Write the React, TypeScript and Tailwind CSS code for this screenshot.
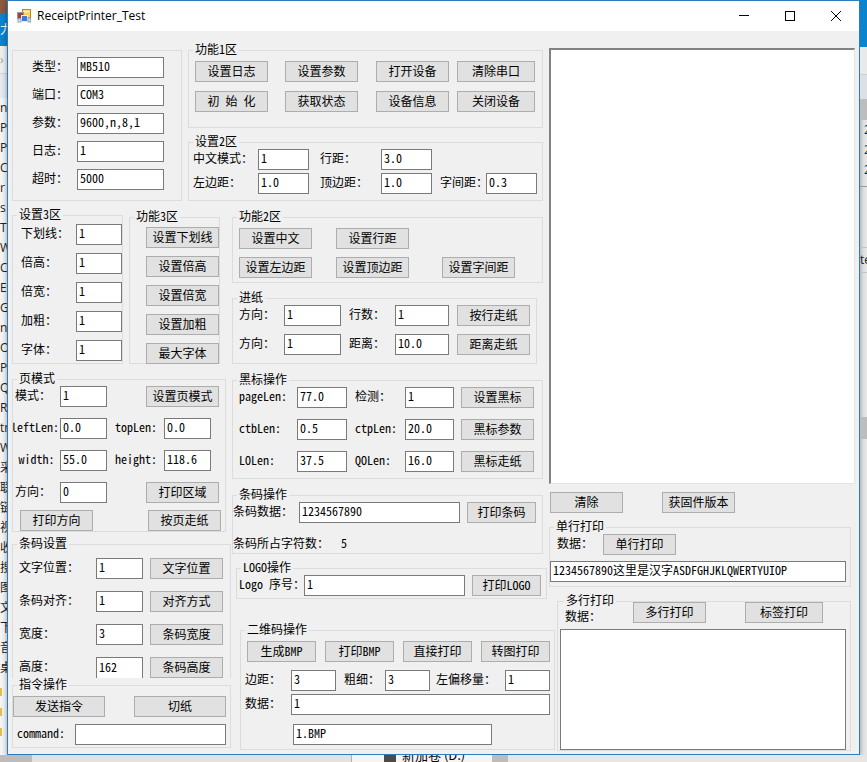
import type { ReactNode } from "react";

const sideItems = [
  "n", "P", "P", "C", "r", "s", "T", "W", "Cl", "Ev", "G", "nc", "O", "Ph", "Q",
  "Ro", "tn", "W", "采", "联", "链", "视", "收", "搜", "图", "文", "下", "音", "桌",
];

const Group = ({
  title,
  className = "",
  children,
}: {
  title?: string;
  className?: string;
  children: ReactNode;
}) => {
  return (
    <fieldset className={`min-w-0 border border-[#dcdcdc] ${className}`}>
      {title && (
        <legend className="ml-1 px-0.5 pb-0.5 leading-3">{title}</legend>
      )}
      {children}
    </fieldset>
  );
};

const Btn = ({
  children,
  className = "w-[73px]",
}: {
  children: ReactNode;
  className?: string;
}) => {
  return (
    <button
      type="button"
      className={`h-[21px] shrink-0 border border-[#adadad] bg-[#e1e1e1] pb-0.5 text-center leading-[17px] whitespace-nowrap ${className}`}
    >
      {children}
    </button>
  );
};

const Field = ({
  id,
  label,
  value = "",
  labelClass = "",
  inputClass = "",
}: {
  id: string;
  label: string;
  value?: string;
  labelClass?: string;
  inputClass?: string;
}) => {
  return (
    <>
      <label
        htmlFor={id}
        className={`leading-[18px] whitespace-nowrap ${labelClass}`}
      >
        {label}
      </label>
      <input
        id={id}
        type="text"
        defaultValue={value}
        className={`h-[21px] w-full min-w-0 border border-[#7a7a7a] bg-white px-0.5 pb-1 leading-[15px] outline-none ${inputClass}`}
      />
    </>
  );
};

const AppIcon = () => (
  <svg width="14" height="14" viewBox="0 0 14 14" aria-hidden="true">
    <rect x="5.5" y="0.5" width="8" height="8" fill="#f8d252" stroke="#b98a1c" />
    <rect x="6.5" y="1.5" width="6" height="2" fill="#fdeeb0" />
    <rect x="0.5" y="3.5" width="6" height="6" fill="#c8341f" stroke="#8d9bb0" />
    <rect x="4.5" y="6.5" width="6" height="6" fill="#3f78d8" stroke="#e6edf8" />
    <rect x="1" y="10" width="3" height="3" fill="#e4e7ee" stroke="#9aa6ba" />
    <rect x="11" y="9" width="2.5" height="4" fill="#cfd8e8" stroke="#9aa6ba" />
  </svg>
);

const TitleBar = () => {
  return (
    <header className="flex h-[30px] items-center bg-white pl-[9px]">
      <AppIcon />
      <h1 className="ml-1.5 flex-1 font-['Open_Sans','Noto_Sans',sans-serif] text-[12px] font-normal">
        ReceiptPrinter_Test
      </h1>
      <button type="button" aria-label="Minimize" className="flex h-full w-[46px] items-center justify-center">
        <svg width="10" height="10" viewBox="0 0 10 10" stroke="#000" fill="none">
          <path d="M0 4.5h10" />
        </svg>
      </button>
      <button type="button" aria-label="Maximize" className="flex h-full w-[46px] items-center justify-center">
        <svg width="10" height="10" viewBox="0 0 10 10" stroke="#000" fill="none">
          <rect x="0.5" y="0.5" width="9" height="9" />
        </svg>
      </button>
      <button type="button" aria-label="Close" className="flex h-full w-[46px] items-center justify-center">
        <svg width="10" height="10" viewBox="0 0 10 10" stroke="#000" fill="none">
          <path d="M0 0l10 10M10 0L0 10" />
        </svg>
      </button>
    </header>
  );
};

const TopArea = () => {
  return (
    <div className="flex gap-[6px]">
      <Group className="mt-[7px] w-[170px] pt-1.5 pr-[17px] pl-[19px]">
        <div className="grid grid-cols-[45px_1fr] gap-y-[7px]">
          <Field id="type" label="类型：" value="MB510" />
          <Field id="port" label="端口：" value="COM3" />
          <Field id="params" label="参数：" value="9600,n,8,1" />
          <Field id="log" label="日志:" value="1" />
          <Field id="timeout" label="超时：" value="5000" />
        </div>
      </Group>
      <div className="flex w-[355px] flex-col gap-[7px]">
        <Group title="功能1区" className="pb-[15px]">
          <div className="grid grid-cols-[90px_91px_81px_78px] gap-y-[9px] pt-1 pl-1.5">
            <Btn>设置日志</Btn>
            <Btn>设置参数</Btn>
            <Btn>打开设备</Btn>
            <Btn className="w-[78px]">清除串口</Btn>
            <Btn>初 始 化</Btn>
            <Btn>获取状态</Btn>
            <Btn>设备信息</Btn>
            <Btn className="w-[78px]">关闭设备</Btn>
          </div>
        </Group>
        <Group title="设置2区" className="pb-1.5">
          <div className="grid grid-cols-[69px_51px_72px_51px_54px_51px] gap-y-[3px]">
            <Field id="cnMode" label="中文模式：" value="1" labelClass="pl-1" />
            <Field id="lineGap" label="行距：" value="3.0" labelClass="pl-[11px]" />
            <span className="col-span-2" />
            <Field id="leftGap" label="左边距：" value="1.0" labelClass="pl-1" />
            <Field id="topGap" label="顶边距：" value="1.0" labelClass="pl-[11px]" />
            <Field id="charGap" label="字间距：" value="0.3" labelClass="pl-2" />
          </div>
        </Group>
      </div>
    </div>
  );
};

const LeftColumn = () => {
  return (
    <div className="flex w-[220px] flex-col">
      <div className="flex gap-[6px]">
        <Group title="设置3区" className="w-[111px] pb-px">
          <div className="grid grid-cols-[63px_46px] gap-y-2 pt-0.5">
            <Field id="underline" label="下划线：" value="1" labelClass="pl-2" />
            <Field id="tall" label="倍高：" value="1" labelClass="pl-2" />
            <Field id="wide" label="倍宽：" value="1" labelClass="pl-2" />
            <Field id="bold" label="加粗：" value="1" labelClass="pl-2" />
            <Field id="font" label="字体：" value="1" labelClass="pl-2" />
          </div>
        </Group>
        <Group title="功能3区" className="mt-0.5 w-[91px]">
          <div className="-mb-px flex flex-col items-end gap-2 pt-[3px]">
            <Btn>设置下划线</Btn>
            <Btn>设置倍高</Btn>
            <Btn>设置倍宽</Btn>
            <Btn>设置加粗</Btn>
            <Btn>最大字体</Btn>
          </div>
        </Group>
      </div>

      <Group title="页模式" className="mt-2 w-[214px]">
        <div className="grid grid-cols-[47px_47px_57px_47px] gap-y-[11px]">
          <Field id="pageMode" label="模式：" value="1" labelClass="pl-0.5" />
          <div className="col-span-2 flex justify-end">
            <Btn className="-mr-2 w-[73px]">设置页模式</Btn>
          </div>
          <Field id="leftLen" label="leftLen:" value="0.0" labelClass="-ml-0.5" />
          <Field id="topLen" label="topLen:" value="0.0" labelClass="pl-2" />
          <Field id="width" label="width:" value="55.0" labelClass="text-center" />
          <Field id="height" label="height:" value="118.6" labelClass="pl-2" />
          <Field id="direction" label="方向：" value="0" labelClass="pl-0.5" />
          <div className="col-span-2 flex justify-end">
            <Btn className="-mr-2 w-[73px]">打印区域</Btn>
          </div>
        </div>
        <div className="flex justify-between pt-[7px] pr-1 pl-[7px]">
          <Btn>打印方向</Btn>
          <Btn>按页走纸</Btn>
        </div>
      </Group>

      <Group title="条码设置" className="mt-[5px] mr-px border-b-0">
        <div className="grid grid-cols-[83px_47px_80px] gap-y-3 pt-[7px]">
          <Field id="textPos" label="文字位置：" value="1" labelClass="pl-1.5" />
          <Btn className="ml-[7px] w-[73px]">文字位置</Btn>
          <Field id="barAlign" label="条码对齐：" value="1" labelClass="pl-1.5" />
          <Btn className="ml-[7px] w-[73px]">对齐方式</Btn>
          <Field id="barWidth" label="宽度：" value="3" labelClass="pl-1.5" />
          <Btn className="ml-[7px] w-[73px]">条码宽度</Btn>
          <Field
            id="barHeight"
            label="高度："
            value="162"
            labelClass="pl-1.5"
            inputClass="border-b-0"
          />
          <Btn className="ml-[7px] w-[73px]">条码高度</Btn>
        </div>
      </Group>

      <Group title="指令操作" className="mr-px pb-0.5">
        <div className="flex justify-between pt-1 pr-1">
          <Btn className="w-[92px]">发送指令</Btn>
          <Btn className="w-[92px]">切纸</Btn>
        </div>
        <div className="grid grid-cols-[62px_1fr] pt-[7px] pr-1">
          <Field id="command" label="command:" labelClass="pl-1" />
        </div>
      </Group>
    </div>
  );
};

const MiddleColumn = () => {
  return (
    <div className="flex flex-1 flex-col pt-0.5">
      <Group title="功能2区" className="mr-1.5 pb-1">
        <div className="grid grid-cols-[97px_106px_73px] gap-y-2 pt-1 pl-1.5">
          <Btn>设置中文</Btn>
          <Btn>设置行距</Btn>
          <span />
          <Btn>设置左边距</Btn>
          <Btn>设置顶边距</Btn>
          <Btn>设置字间距</Btn>
        </div>
      </Group>

      <Group title="进纸" className="mt-2 mr-3 pb-2">
        <div className="grid grid-cols-[51px_57px_54px_54px_80px] gap-y-2">
          <Field id="feedDir1" label="方向：" value="1" labelClass="pl-1.5" />
          <Field id="feedLines" label="行数：" value="1" labelClass="pl-2" />
          <Btn className="ml-2 w-[73px]">按行走纸</Btn>
          <Field id="feedDir2" label="方向：" value="1" labelClass="pl-1.5" />
          <Field id="feedDist" label="距离：" value="10.0" labelClass="pl-2" />
          <Btn className="ml-2 w-[73px]">距离走纸</Btn>
        </div>
      </Group>

      <Group title="黑标操作" className="mt-[9px] mr-1.5 pb-1.5">
        <div className="grid grid-cols-[64px_50px_58px_49px_80px] gap-y-[11px]">
          <Field id="pageLen" label="pageLen:" value="77.0" labelClass="pl-1.5" />
          <Field id="detect" label="检测：" value="1" labelClass="pl-2" />
          <Btn className="ml-[7px] w-[73px]">设置黑标</Btn>
          <Field id="ctbLen" label="ctbLen:" value="0.5" labelClass="pl-1.5" />
          <Field id="ctpLen" label="ctpLen:" value="20.0" labelClass="pl-2" />
          <Btn className="ml-[7px] w-[73px]">黑标参数</Btn>
          <Field id="l0Len" label="LOLen:" value="37.5" labelClass="pl-1.5" />
          <Field id="q0Len" label="QOLen:" value="16.0" labelClass="pl-2" />
          <Btn className="ml-[7px] w-[73px]">黑标走纸</Btn>
        </div>
      </Group>

      <Group title="条码操作" className="mt-[9px] mr-1.5">
        <div className="grid grid-cols-[66px_161px_76px]">
          <Field id="barData" label="条码数据：" value="1234567890" />
          <Btn className="ml-[7px] w-[69px]">打印条码</Btn>
        </div>
        <p className="flex gap-3 pt-[9px] leading-[21px]">
          <span>条码所占字符数：</span>
          <output>5</output>
        </p>
      </Group>

      <Group title="LOGO操作" className="mt-[7px] mr-0.5 ml-1 pb-0.5">
        <div className="grid grid-cols-[67px_161px_76px]">
          <Field id="logoNo" label="Logo 序号：" value="1" labelClass="pl-0.5" />
          <Btn className="ml-[7px] w-[69px]">打印LOGO</Btn>
        </div>
      </Group>

      <Group title="二维码操作" className="mt-6 -mr-1.5 ml-2 pb-1">
        <div className="flex justify-between pt-1 pr-1 pl-1.5">
          <Btn className="w-[69px]">生成BMP</Btn>
          <Btn className="w-[69px]">打印BMP</Btn>
          <Btn className="w-[69px]">直接打印</Btn>
          <Btn className="w-[69px]">转图打印</Btn>
        </div>
        <div className="grid grid-cols-[50px_45px_49px_45px_75px_45px] pt-2">
          <Field id="qrMargin" label="边距：" value="3" labelClass="pl-1" />
          <Field id="qrSize" label="粗细：" value="3" labelClass="pl-2" />
          <Field id="qrShift" label="左偏移量：" value="1" labelClass="pl-1.5" />
        </div>
        <div className="grid grid-cols-[50px_259px] pt-[3px]">
          <Field id="qrData" label="数据：" value="1" labelClass="pl-1" />
        </div>
        <input
          type="text"
          aria-label="BMP"
          defaultValue="1.BMP"
          className="mt-[9px] ml-[52px] block h-[21px] w-[199px] border border-[#7a7a7a] bg-white px-0.5 pb-1 leading-[15px] outline-none"
        />
      </Group>
    </div>
  );
};

const RightColumn = () => {
  return (
    <div className="flex min-w-0 flex-1 flex-col pt-[17px] pr-1">
      <textarea
        aria-label="output"
        className="h-[436px] w-full resize-none border border-t-2 border-l-2 border-[#e3e3e3] border-t-[#828282] border-l-[#828282] bg-white outline-none"
      />
      <div className="flex gap-[39px] pt-2 pl-px">
        <Btn>清除</Btn>
        <Btn>获固件版本</Btn>
      </div>
      <Group title="单行打印" className="mt-[7px] mr-1 pr-1 pb-1">
        <div className="flex gap-[10px] pl-[7px]">
          <label htmlFor="singleData" className="leading-[18px]">
            数据：
          </label>
          <Btn>单行打印</Btn>
        </div>
        <input
          id="singleData"
          type="text"
          defaultValue="1234567890这里是汉字ASDFGHJKLQWERTYUIOP"
          className="mt-1.5 block h-[21px] w-full border border-[#7a7a7a] bg-white px-0.5 pb-1 leading-[15px] outline-none"
        />
      </Group>
      <Group title="多行打印" className="mt-[7px] mr-1 ml-2 flex-1 pr-1 pl-0.5">
        <div className="-mt-1.5 flex pl-[5px]">
          <label htmlFor="multiData" className="w-[68px] pt-[5px] leading-[18px]">
            数据：
          </label>
          <Btn>多行打印</Btn>
          <Btn className="ml-[39px] w-[78px]">标签打印</Btn>
        </div>
        <textarea
          id="multiData"
          className="mt-1 block h-[121px] w-full resize-none border border-[#7a7a7a] bg-white outline-none"
        />
      </Group>
    </div>
  );
};

export default function App() {
  return (
    <div className="flex min-h-screen flex-col overflow-hidden bg-[#e6e6e6] font-['Noto_Sans_Mono_CJK_SC','Liberation_Mono','Noto_Sans_CJK_SC',monospace] text-[12px] text-black">
      <div className="flex">
        <aside className="w-[7px] shrink-0 overflow-hidden bg-[#f4f4f4] font-['Open_Sans','Noto_Sans_CJK_SC',sans-serif]">
          <div className="h-[14px] bg-[#8c5a3c]" />
          <div className="h-8 bg-[#0a84cf] leading-8 text-white">力</div>
          <div className="h-[28px] border-b border-[#d5d5d5] bg-[#eeeeee] leading-7 text-[#9a9a9a]">›</div>
          <div className="h-6 bg-[#e3e9ee]" />
          <ul className="text-[#222]">
            {sideItems.map((item, i) => (
              <li key={i} className="h-5 leading-5">
                {item}
              </li>
            ))}
          </ul>
          <div className="flex flex-col gap-3 pt-2.5">
            <div className="h-2 w-0.5 bg-[#e2bf55]" />
            <div className="h-2 w-0.5 bg-[#e2bf55]" />
            <div className="h-2 w-0.5 bg-[#e2bf55]" />
          </div>
        </aside>

        <main className="min-w-0 flex-1 border border-[#2b7cc0] bg-[#f0f0f0] shadow-[0_1px_5px_rgba(0,0,0,0.4)]">
          <TitleBar />
          <div className="flex pb-[3px] pl-1">
            <div className="flex w-[537px] shrink-0 flex-col pt-3">
              <TopArea />
              <div className="flex pt-[7px]">
                <LeftColumn />
                <MiddleColumn />
              </div>
            </div>
            <RightColumn />
          </div>
        </main>

        <aside className="w-[7px] shrink-0 overflow-hidden font-['Open_Sans',sans-serif] text-[#222]">
          <div className="h-[47px] bg-[#0a84cf]" />
          <div className="h-7 border-b border-[#cfcfcf] bg-[#e9e9e9]" />
          <div className="h-6 bg-[#dde1e6]" />
          <div className="h-[21px] bg-[#bdbdbd]" />
          <ul className="h-[67px] border-b border-[#9a9a9a] pl-1">
            <li className="h-5 leading-5">2</li>
            <li className="h-5 leading-5">2</li>
            <li className="h-5 leading-5">2</li>
          </ul>
          <div className="mt-15 border-y border-[#c4c4c4] leading-6">te</div>
          <div className="mt-36 h-[22px] bg-[#bdbdbd]" />
        </aside>
      </div>

      <footer className="flex flex-1 overflow-hidden font-['Noto_Sans_CJK_SC',sans-serif] text-[13px] leading-[0px]">
        <div className="w-8 bg-[#bcbcbc]" />
        <div className="w-[320px] border-r border-[#b0b0b0] bg-[#e2e2e2]" />
        <div className="flex w-[140px] gap-1.5 bg-[#f4f4f4] pl-8">
          <span className="h-full w-3 bg-[#4a4a4a]" />
          <span>新加卷 (D:)</span>
        </div>
        <div className="w-4 bg-[#bcbcbc]" />
        <div className="flex-1 bg-[#e6e6e6]" />
      </footer>
    </div>
  );
}
